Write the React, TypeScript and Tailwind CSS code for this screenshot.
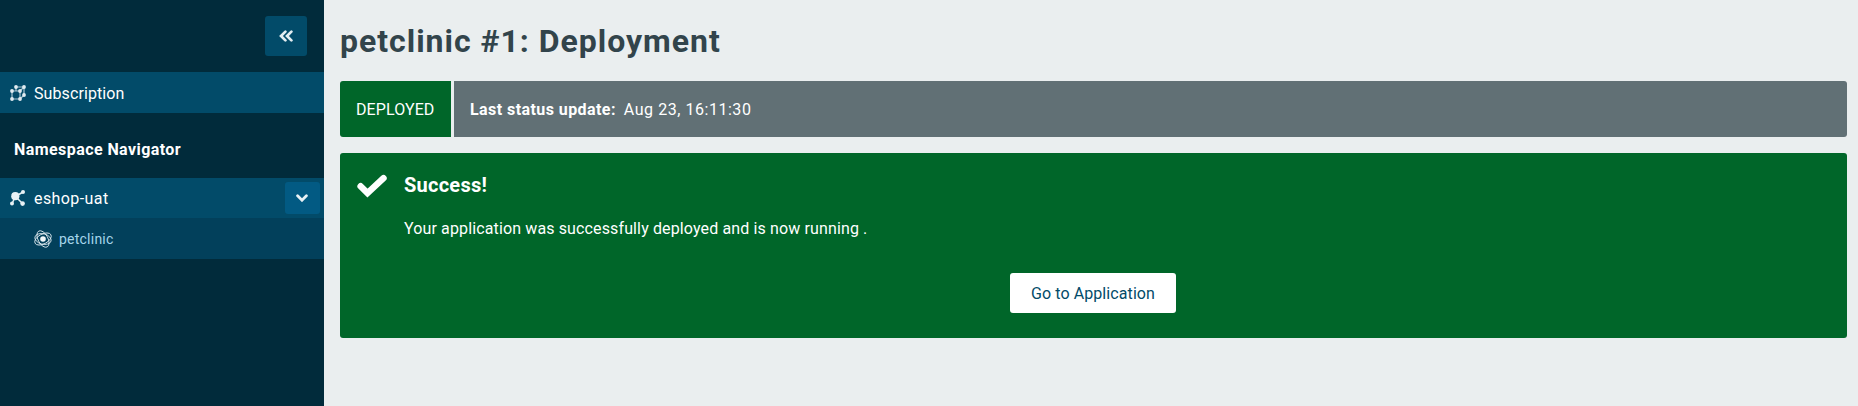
import React from 'react';

function ClusterIcon() {
  return (
    <svg width="16" height="16" viewBox="0 0 16 16" fill="#e1ecf1" stroke="#a9c6d3" strokeWidth="1.2">
      <path d="M2 6h8v8H2z M6 2h8v8 M6 2v4 M10 6l4-4 M10 14l4-4" fill="none" />
      <g stroke="none">
        <circle cx="2" cy="6" r="1.9" />
        <circle cx="10" cy="6" r="1.9" />
        <circle cx="2" cy="14" r="1.9" />
        <circle cx="10" cy="14" r="1.9" />
        <circle cx="6" cy="2" r="1.9" />
        <circle cx="14" cy="2" r="1.9" />
        <circle cx="14" cy="10" r="1.9" />
      </g>
    </svg>
  );
}

function NodesIcon() {
  return (
    <svg width="16" height="16" viewBox="0 0 16 16" fill="#e8f1f5">
      <path d="M5.5 6.5L13 2M5.5 6.5L2 13.5M5.5 6.5L12.5 13.5" stroke="#e8f1f5" strokeWidth="1.5" />
      <circle cx="5.3" cy="6.2" r="4.1" />
      <circle cx="13" cy="2.1" r="2" />
      <circle cx="2" cy="13.6" r="2" />
      <circle cx="12.6" cy="13.6" r="2.3" />
    </svg>
  );
}

function AtomIcon() {
  return (
    <svg width="18" height="18" viewBox="0 0 18 18" fill="none" stroke="#dbe8ee" strokeWidth="0.85">
      <circle cx="9" cy="9" r="2.8" fill="#f2f7f9" stroke="none" />
      <ellipse cx="9" cy="9" rx="9" ry="4.9" transform="rotate(-28 9 9)" />
      <ellipse cx="9" cy="9" rx="9" ry="4.9" transform="rotate(62 9 9)" />
      <ellipse cx="9" cy="9" rx="8.3" ry="5.2" transform="rotate(14 9 9)" />
    </svg>
  );
}

function Sidebar() {
  return (
    <aside className="flex w-[324px] shrink-0 flex-col bg-[#012b3b]">
      <div className="flex h-[72px] items-center justify-end pr-[17px]">
        <button className="flex h-10 w-[42px] items-center justify-center rounded-[3px] bg-[#024b69]">
          <svg width="14" height="12" viewBox="0 0 14 12" fill="none" stroke="#e3edf1" strokeWidth="2.7" strokeLinecap="round">
            <path d="M6.4 1.6L2 6l4.4 4.4M12.4 1.6L8 6l4.4 4.4" />
          </svg>
        </button>
      </div>
      <a className="flex h-[41px] items-center bg-[#024b69] pl-[10px] text-white">
        <ClusterIcon />
        <span className="ml-2 pt-[2px] tracking-[0.1px]">Subscription</span>
      </a>
      <h2 className="flex h-[65px] items-center pl-[14px] pt-[9px] font-bold tracking-[0.43px] text-white">Namespace Navigator</h2>
      <div className="flex h-10 items-center bg-[#024b69] pl-[10px] pr-1 text-white">
        <NodesIcon />
        <span className="ml-2 pt-px tracking-[0.42px]">eshop-uat</span>
        <button className="ml-auto flex h-8 w-[35px] items-center justify-center rounded-[3px] bg-[#025a83]">
          <svg className="mr-px" width="12" height="8" viewBox="0 0 12 8" fill="none" stroke="#e8f1f5" strokeWidth="2.8" strokeLinecap="round">
            <path d="M1.6 1.8L6 6.2l4.4-4.4" />
          </svg>
        </button>
      </div>
      <a className="flex h-[41px] items-center bg-[#02405b] pl-[34px] text-sm text-[#a5d5ea]">
        <AtomIcon />
        <span className="ml-[7px] tracking-[0.23px]">petclinic</span>
      </a>
    </aside>
  );
}

export default function App() {
  return (
    <div className="flex h-[406px] bg-[#eaeeef] font-['Roboto',sans-serif] text-base">
      <Sidebar />
      <main className="flex min-w-0 flex-1 flex-col pl-4 pr-[11px]">
        <h1 className="flex h-[81px] items-center text-[32px] font-bold tracking-[0.98px] text-[#32444b]">petclinic #1: Deployment</h1>
        <div className="flex h-14 gap-[3px] text-white">
          <div className="flex w-[111px] items-center rounded-l-[3px] bg-[#006629] pl-4 pt-px tracking-[0.1px]">DEPLOYED</div>
          <div className="flex flex-1 items-center rounded-r-[3px] bg-[#617075] pl-4 pt-px">
            <span className="font-bold tracking-[0.43px]">Last status update:</span>
            <span className="ml-2 tracking-[0.54px]">Aug 23, 16:11:30</span>
          </div>
        </div>
        <section className="mt-4 flex h-[185px] flex-col rounded-[3px] bg-[#006629] px-4 text-white">
          <div className="flex">
            <svg className="mt-5" width="32" height="26" viewBox="0 0 32 26" fill="none" stroke="#fff" strokeWidth="6.4" strokeLinecap="round">
              <path d="M4.6 13.2l6.9 6.9L27.5 5.2" />
            </svg>
            <div className="ml-4 flex flex-col">
              <h3 className="mt-[18px] text-xl leading-7 font-bold tracking-[0.25px]">Success!</h3>
              <p className="mt-[18px] leading-6 tracking-[0.13px]">Your application was successfully deployed and is now running .</p>
            </div>
          </div>
          <button className="mt-8 mr-px h-10 w-[166px] self-center rounded-[3px] bg-white pt-px tracking-[0.09px] text-[#024b69]">Go to Application</button>
        </section>
      </main>
    </div>
  );
}
